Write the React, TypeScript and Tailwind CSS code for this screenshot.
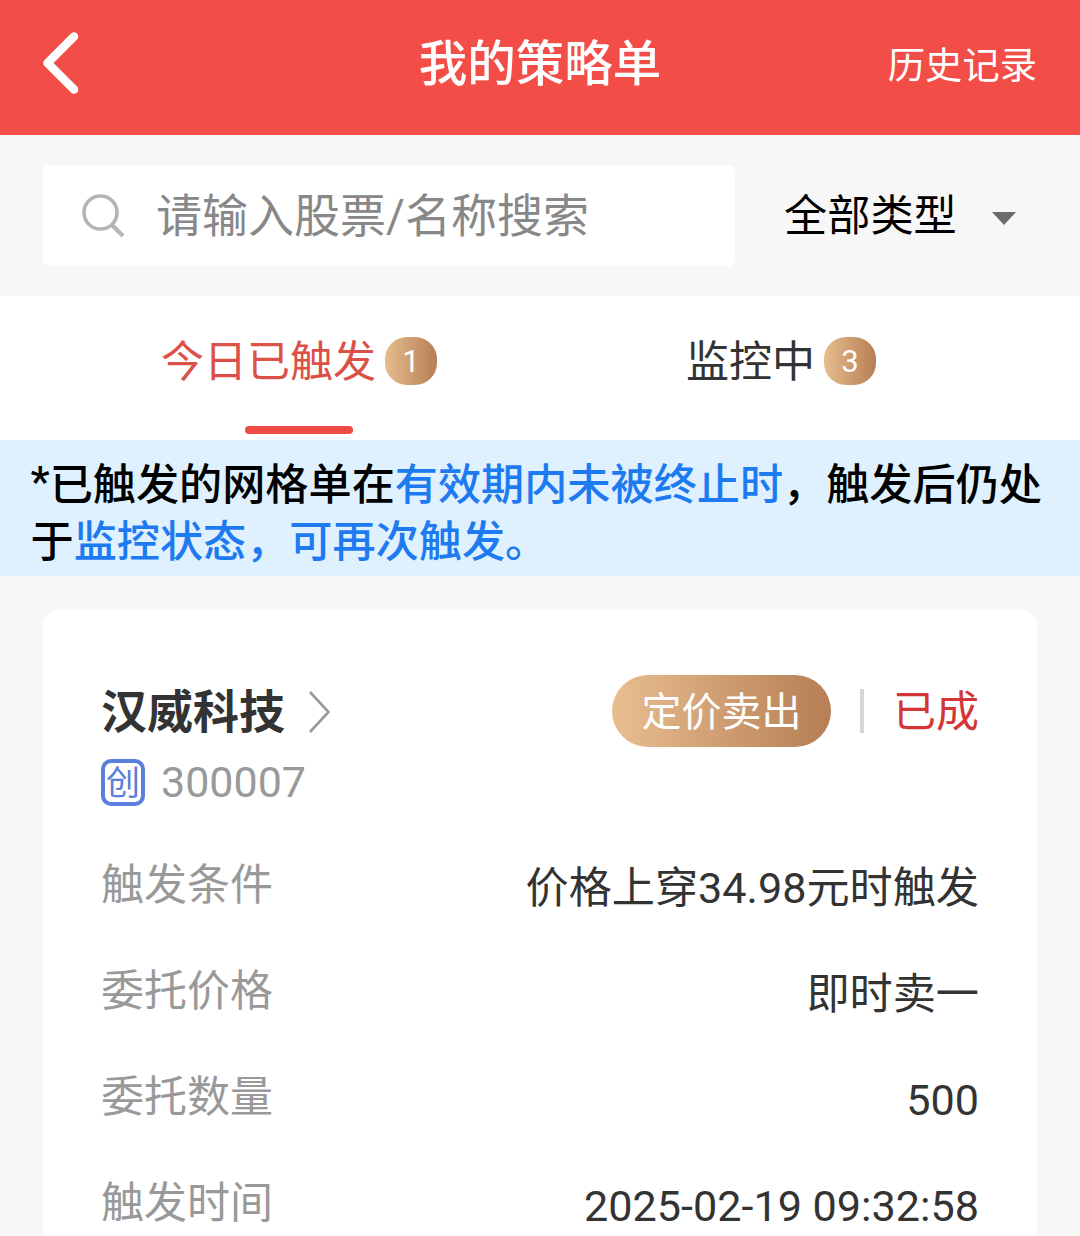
import React from 'react';

type Row = { label: string; value: string };

const rows: Row[] = [
  { label: '触发条件', value: '价格上穿34.98元时触发' },
  { label: '委托价格', value: '即时卖一' },
  { label: '委托数量', value: '500' },
  { label: '触发时间', value: '2025-02-19 09:32:58' },
];

function Header() {
  return (
    <header className="grid h-[135px] grid-cols-[1fr_auto_1fr] bg-[#f24d46] text-white">
      <button className="justify-self-start pl-[40px] pt-[29px] self-start" aria-label="返回">
        <svg width="42" height="68" viewBox="0 0 42 68" fill="none">
          <path d="M34 7.500L7.500 34L34 60.500" stroke="currentColor" strokeWidth="8.500" strokeLinecap="round" strokeLinejoin="round" />
        </svg>
      </button>
      <h1 className="pt-[33px] text-[48.5px] leading-[64px] font-medium">我的策略单</h1>
      <a className="justify-self-end pr-[43px] pt-[41px] text-[37.3px] leading-[50px]">历史记录</a>
    </header>
  );
}

function SearchBar() {
  return (
    <section className="flex h-[161px] items-start bg-[#f7f7f7] pt-[30px] pl-[43px]">
      <div className="flex h-[101px] w-[692px] items-center rounded-[6px] bg-white pl-[38px]">
        <svg width="46" height="46" viewBox="0 0 46 46" fill="none" stroke="#b5b5b5" strokeWidth="3.600">
          <circle cx="19.500" cy="19.500" r="16.500" />
          <path d="M30.500 31.500L42 43" strokeWidth="4.200" />
        </svg>
        <span className="ml-[29px] mt-px text-[46px] leading-[60px] whitespace-nowrap text-[#888888]">请输入股票/名称搜索</span>
      </div>
      <div className="flex h-[101px] items-center pl-[49px] text-black">
        <span className="mt-[3px] text-[43.2px] leading-[60px] whitespace-nowrap">全部类型</span>
        <svg className="ml-[35px] mt-[5px]" width="24" height="13" viewBox="0 0 24 13">
          <path d="M0 0H24L12 13Z" fill="#6b6b6b" />
        </svg>
      </div>
    </section>
  );
}

function CountBadge({ count }: { count: number }) {
  return (
    <span className="flex h-[48px] w-[52px] items-center justify-center rounded-[22px] bg-linear-to-r from-[#e6bd8e] to-[#b67e54] pt-px text-[31px] leading-none text-white">
      {count}
    </span>
  );
}

function Tabs() {
  return (
    <nav className="flex h-[144px] bg-white text-[43px] leading-[60px]">
      <div className="flex w-[598px] flex-col items-center">
        <div className="mt-[35px] flex items-center gap-[9px] text-[#db5148]">
          <span className="translate-y-px">今日已触发</span>
          <CountBadge count={1} />
        </div>
        <div className="mt-[35px] h-[8px] w-[108px] rounded-full bg-[#ef4b45]" />
      </div>
      <div className="flex flex-1 justify-start pl-[88px]">
        <div className="mt-[35px] flex h-[60px] items-center gap-[9px] text-[#333333]">
          <span className="translate-y-px">监控中</span>
          <CountBadge count={3} />
        </div>
      </div>
    </nav>
  );
}

function Notice() {
  return (
    <p className="h-[136px] bg-[#dff1fe] pt-[17px] pl-[30.500px] text-[43.15px] leading-[57px] font-medium whitespace-nowrap text-black">
      <span className="inline-block -translate-y-[4px]">*</span>已触发的网格单在<span className="text-[#1e7af0]">有效期内未被终止时</span>，触发后仍处
      <br />
      于<span className="text-[#1e7af0]">监控状态，可再次触发。</span>
    </p>
  );
}

function OrderCard() {
  return (
    <article className="mx-[43px] mt-[34px] h-[700px] rounded-[16px] bg-white px-[58px] pt-[65px]">
      <div className="flex h-[72px] items-center">
        <h2 className="mt-[2px] text-[46px] leading-[60px] font-bold text-[#333333]">汉威科技</h2>
        <svg className="ml-[23px] mt-[2px]" width="24" height="44" viewBox="0 0 24 44" fill="none">
          <path d="M2 2L20.500 22L2 42" stroke="#999999" strokeWidth="2.600" />
        </svg>
        <span className="ml-auto flex h-[72px] w-[219px] items-center justify-center rounded-full bg-linear-to-r from-[#e8be90] to-[#b67e54] pt-[3px] text-[40px] leading-[54px] text-white">
          定价卖出
        </span>
        <span className="ml-[29px] h-[44px] w-[4px] bg-[#d8d8d8]" />
        <span className="ml-[29px] mt-[2px] text-[43px] leading-[60px] text-[#d33636]">已成</span>
      </div>
      <div className="mt-[12px] flex h-[48px] items-center">
        <span className="mb-px flex h-[47px] w-[44px] items-center justify-center rounded-[10px] border-[4px] border-[#5b7fdc] text-[34px] leading-none text-[#5b7fdc]">
          创
        </span>
        <span className="ml-[16px] mb-[2px] text-[43px] leading-[48px] text-[#999999]">300007</span>
      </div>
      <dl className="mt-[45px]">
        {rows.map((row) => (
          <div key={row.label} className="flex h-[106px] items-start justify-between">
            <dt className="text-[43px] leading-[66px] text-[#999999]">{row.label}</dt>
            <dd className="mt-[4px] text-[43.15px] leading-[66px] text-[#333333]">{row.value}</dd>
          </div>
        ))}
      </dl>
    </article>
  );
}

export default function App() {
  return (
    <main className="h-[1236px] w-[1080px] overflow-hidden bg-[#f7f7f7] font-[Roboto,'Noto_Sans_CJK_SC',sans-serif]">
      <Header />
      <SearchBar />
      <Tabs />
      <Notice />
      <OrderCard />
    </main>
  );
}
